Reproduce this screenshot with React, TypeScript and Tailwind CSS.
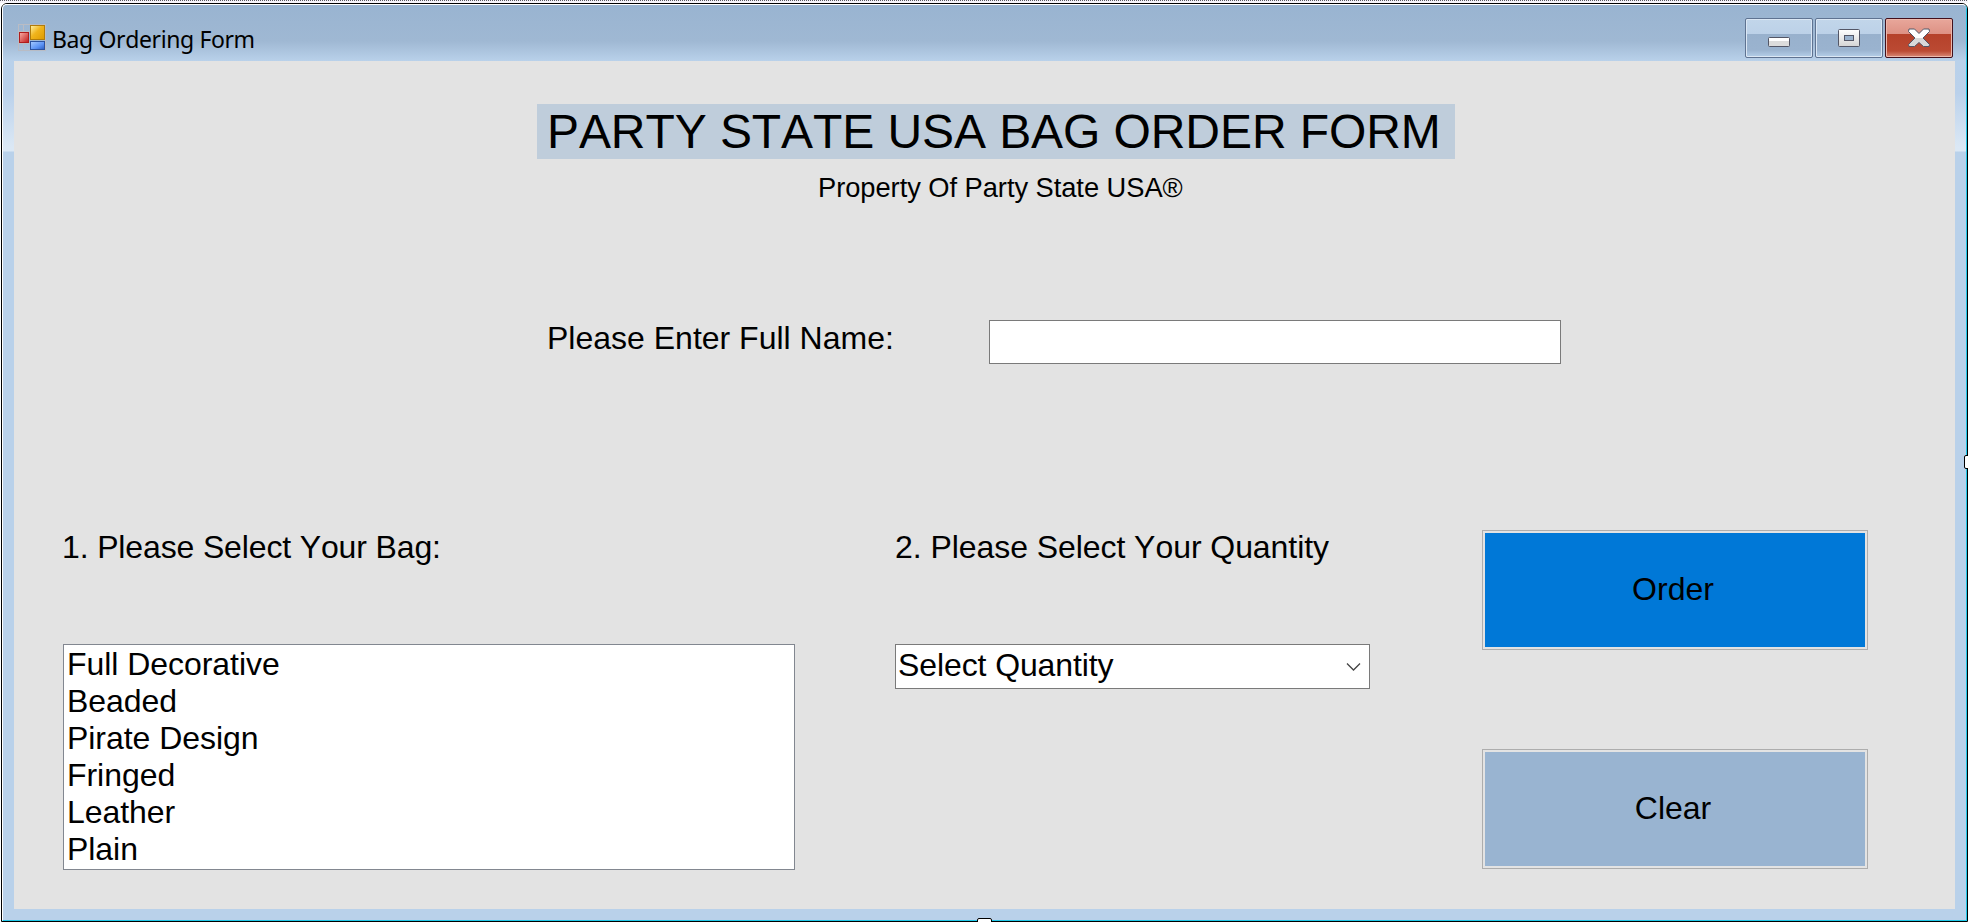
import type { ReactNode } from 'react';

const bags = ['Full Decorative', 'Beaded', 'Pirate Design', 'Fringed', 'Leather', 'Plain'];

function FormIcon() {
  return (
    <svg width="28" height="28" viewBox="0 0 28 28" className="shrink-0" shapeRendering="crispEdges">
      <defs>
        <linearGradient id="gold" x1="0" y1="0" x2="1" y2="1">
          <stop offset="0" stopColor="#fff3a8" />
          <stop offset="0.45" stopColor="#f0b41c" />
          <stop offset="1" stopColor="#dd9a00" />
        </linearGradient>
        <linearGradient id="red" x1="0" y1="0" x2="1" y2="1">
          <stop offset="0" stopColor="#f9b0a8" />
          <stop offset="1" stopColor="#c01818" />
        </linearGradient>
        <linearGradient id="blue" x1="0" y1="0" x2="1" y2="1">
          <stop offset="0" stopColor="#a8ccff" />
          <stop offset="0.6" stopColor="#5b93f5" />
          <stop offset="1" stopColor="#2a5cc0" />
        </linearGradient>
      </defs>
      <path d="M0.5 0.5H27.5V26.5H0.5ZM5.5 0.5V26.5M0.5 7.5H11.5M0.5 19.5H11.5" fill="none" stroke="#b9bcc4" />
      <rect x="1.5" y="8.5" width="9" height="10" fill="url(#red)" stroke="#b01c1c" />
      <rect x="12.5" y="1.5" width="14" height="14" fill="url(#gold)" stroke="#b07c0c" />
      <rect x="12.5" y="17.5" width="14" height="8" fill="url(#blue)" stroke="#2c53a0" />
    </svg>
  );
}

function CaptionButton({ children, label }: { children: ReactNode; label: string }) {
  return (
    <button
      aria-label={label}
      className="flex h-10 w-[68px] items-center justify-center rounded-[2px] border border-[#5f7391] bg-[linear-gradient(180deg,#c2d6ea_0px,#bcd1e8_15px,#98b1cd_15px,#9ab3cf_31px,#b5cfe9_38px)] shadow-[inset_0_0_0_1px_#dbe7f4]"
    >
      {children}
    </button>
  );
}

function CommandButton({ children, color }: { children: ReactNode; color: string }) {
  return (
    <button className="h-[120px] w-[386px] border border-[#adadad] p-[2px] text-[32px] leading-[37px]">
      <span className={`flex h-full items-center justify-center pr-1 pb-[2px] ${color}`}>{children}</span>
    </button>
  );
}

function FrameEdge() {
  return (
    <div className="w-[11px] shrink-0 bg-[linear-gradient(180deg,#b9d1ea_0px,#bad1eb_32px,#dbe8f5_86px,#dbe8f5_90px,#b9d1ea_91px)]" />
  );
}

export default function App() {
  return (
    <div className="flex h-[922px] w-[1968px] flex-col overflow-hidden bg-white font-['Liberation_Sans',Arial,sans-serif] text-black [font-kerning:none]">
      <div className="h-px shrink-0 bg-[repeating-linear-gradient(90deg,#5a5a62_0px,#5a5a62_1px,#f4f2f8_1px,#f4f2f8_2px)]" />
      <div className="h-[2px] shrink-0 bg-[#f7f4fa]" />
      <div className="relative ml-px flex h-[919px] w-[1967px] flex-col rounded-t-[6px] border border-black">
        <div className="flex min-h-0 flex-1 flex-col rounded-t-[5px] border border-t-white border-r-[#1fc8e8] border-b-[#1fc8e8] border-l-white bg-[#b9d1ea]">
          <header className="flex h-14 shrink-0 items-start justify-between rounded-t-[4px] bg-[linear-gradient(180deg,#99b4d1_0px,#9fb8d3_36px,#b9d1ea_56px)] pt-[13px] pr-[13px] pl-[15px]">
            <div className="flex pt-[6px]">
              <FormIcon />
              <h1 className="-mt-px ml-[6px] font-['Noto_Sans','Open_Sans',sans-serif] text-[23px] leading-8 tracking-[-0.38px]">
                Bag Ordering Form
              </h1>
            </div>
            <div className="flex gap-[2px]">
              <CaptionButton label="Minimize">
                <svg width="22" height="10" viewBox="0 0 22 10" className="mt-2">
                  <rect x="0.5" y="0.5" width="21" height="9" rx="1" fill="#dcdcdc" stroke="#535666" />
                  <rect x="1" y="1" width="20" height="3" fill="#fff" />
                </svg>
              </CaptionButton>
              <CaptionButton label="Maximize">
                <svg width="22" height="18" viewBox="0 0 22 18">
                  <defs>
                    <linearGradient id="max" x1="0" y1="0" x2="0" y2="1">
                      <stop offset="0" stopColor="#fff" />
                      <stop offset="1" stopColor="#d4d4d4" />
                    </linearGradient>
                  </defs>
                  <rect x="0.5" y="0.5" width="21" height="17" rx="1" fill="url(#max)" stroke="#535666" />
                  <rect x="6.5" y="6.5" width="9" height="5" fill="#98b1cd" stroke="#535666" />
                </svg>
              </CaptionButton>
              <button
                aria-label="Close"
                className="flex h-10 w-[68px] items-center justify-center rounded-[2px] border border-[#43101c] bg-[linear-gradient(180deg,#e8a79b_0px,#dd9184_15px,#b5412a_15px,#bb4a33_32px,#d98a78_38px)] shadow-[inset_0_0_0_1px_#ecb8ac]"
              >
                <svg width="24" height="20" viewBox="0 0 24 20">
                  <defs>
                    <linearGradient id="close" x1="0" y1="0" x2="0" y2="1">
                      <stop offset="0.5" stopColor="#fff" />
                      <stop offset="0.5" stopColor="#d8d8d8" />
                    </linearGradient>
                  </defs>
                  <path
                    d="M2 1H7.500L12 5.500L16.500 1H22L22.500 3.500L16 10L22.500 16.500L22 18.500H16.500L12 14.500L7.500 18.500H2L1.500 16.500L8 10L1.500 3.500Z"
                    fill="url(#close)"
                    stroke="#535666"
                    strokeLinejoin="round"
                  />
                </svg>
              </button>
            </div>
          </header>
          <div className="flex h-[848px]">
            <FrameEdge />
            <main className="h-[848px] w-[1941px] bg-[#e3e3e3] pt-[43px] pl-[49px]">
              <section className="flex flex-col items-start">
                <h2 className="ml-[474px] h-[55px] w-[918px] bg-[#bfcddb] pl-[10px] text-[48px] leading-[55px] tracking-[-0.08px] whitespace-nowrap">
                  PARTY STATE USA BAG ORDER FORM
                </h2>
                <p className="mt-[13px] ml-[755px] text-[27.3px] leading-[31px] tracking-[-0.05px]">
                  Property Of Party State USA®
                </p>
              </section>
              <div className="mt-[117px] ml-[484px] flex items-start">
                <label className="w-[442px] text-[32px] leading-[37px]" htmlFor="name">
                  Please Enter Full Name:
                </label>
                <input id="name" className="h-11 w-[572px] border border-[#7a7a7a] bg-white px-1 text-[32px] outline-none" />
              </div>
              <div className="mt-[165px] flex">
                <section className="w-[832px]">
                  <h3 className="-ml-px text-[32px] leading-[37px] tracking-[-0.14px]">1. Please Select Your Bag:</h3>
                  <ul className="mt-[78px] h-[226px] w-[732px] border border-[#828790] bg-white pt-px pl-[3px] text-[32px] leading-[37px] tracking-[-0.05px]">
                    {bags.map((bag) => (
                      <li key={bag}>{bag}</li>
                    ))}
                  </ul>
                </section>
                <section className="w-[587px]">
                  <h3 className="text-[32px] leading-[37px] tracking-[-0.06px]">2. Please Select Your Quantity</h3>
                  <button className="mt-[78px] flex h-[45px] w-[475px] items-center justify-between border border-[#7a7a7a] bg-white pr-[8px] pb-[2px] pl-[2px] text-[32px] leading-[37px] tracking-[-0.1px]">
                    Select Quantity
                    <svg width="15" height="10" viewBox="0 0 15 10" className="mt-[2px]">
                      <path d="M1 1.500L7.500 8L14 1.500" fill="none" stroke="#444" strokeWidth="1.300" />
                    </svg>
                  </button>
                </section>
                <section className="flex flex-col gap-[99px] pt-px">
                  <CommandButton color="bg-[#0078d7]">Order</CommandButton>
                  <CommandButton color="bg-[#99b4d1]">Clear</CommandButton>
                </section>
              </div>
            </main>
            <FrameEdge />
          </div>
        </div>
        <span className="absolute -bottom-[9px] left-[975px] h-[12px] w-[15px] rounded-[2px] border border-black bg-white" />
        <span className="absolute top-[451px] -right-[9px] h-[14px] w-[12px] rounded-[2px] border border-black bg-white" />
      </div>
    </div>
  );
}
